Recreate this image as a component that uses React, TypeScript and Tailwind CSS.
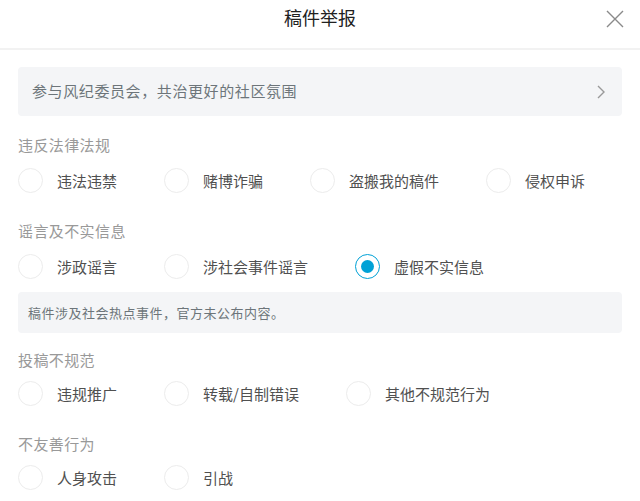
import { useState } from "react";

const font = { fontFamily: '"Noto Sans CJK SC", "Noto Sans", sans-serif' };

interface Section {
  title: string;
  options: string[];
}

const sections: Section[] = [
  { title: "违反法律法规", options: ["违法违禁", "赌博诈骗", "盗搬我的稿件", "侵权申诉"] },
  { title: "谣言及不实信息", options: ["涉政谣言", "涉社会事件谣言", "虚假不实信息"] },
  { title: "投稿不规范", options: ["违规推广", "转载/自制错误", "其他不规范行为"] },
  { title: "不友善行为", options: ["人身攻击", "引战"] },
];

function Radio({ label, checked, onClick }: { label: string; checked: boolean; onClick: () => void }) {
  return (
    <div className="flex shrink-0 items-center mr-[47px] cursor-pointer" onClick={onClick}>
      {checked ? (
        <div className="w-[25px] h-[25px] rounded-full border-[1.5px] border-[#00a1d6] flex items-center justify-center">
          <div className="w-[13px] h-[13px] rounded-full bg-[#00a1d6]" />
        </div>
      ) : (
        <div className="w-[25px] h-[25px] rounded-full border border-[#ececec]" />
      )}
      <span className="ml-[14px] whitespace-nowrap text-[15px] leading-6 text-[#505050]">{label}</span>
    </div>
  );
}

export default function App() {
  const [selected, setSelected] = useState("虚假不实信息");

  return (
    <div className="w-[640px] h-[501px] bg-white overflow-hidden" style={font}>
      {/* 标题栏 */}
      <div className="relative h-[50px] border-b-2 border-[#f2f2f2] flex items-center justify-center">
        <span className="text-[18px] text-[#212121] -mt-[14px]">稿件举报</span>
        <svg className="absolute right-[15px] top-[9px]" width="20" height="20" viewBox="0 0 20 20">
          <path d="M2 2L18 18M18 2L2 18" stroke="#8a8a8a" strokeWidth="1.4" fill="none" />
        </svg>
      </div>

      <div className="px-[18px]">
        <div className="mt-[17px] h-[49px] rounded bg-[#f4f5f7] flex items-center justify-between pl-[14px] pr-[16px]">
          <span className="text-[15px] tracking-[0.6px] text-[#6d757a]">参与风纪委员会，共治更好的社区氛围</span>
          <svg width="10" height="16" viewBox="0 0 10 16">
            <path d="M2 2L8 8L2 14" stroke="#999" strokeWidth="1.4" fill="none" />
          </svg>
        </div>

        {sections.map((s, i) => (
          <div key={s.title} className={i === 0 ? "mt-[19px]" : i === 2 ? "mt-[17px]" : "mt-[28px]"}>
            <div className="text-[15px] leading-5 tracking-[0.4px] text-[#999]">{s.title}</div>
            <div className={i >= 2 ? "mt-[11px] flex items-center" : "mt-[13px] flex items-center"}>
              {s.options.map((o) => (
                <Radio key={o} label={o} checked={selected === o} onClick={() => setSelected(o)} />
              ))}
            </div>
            {i === 1 && selected === "虚假不实信息" && (
              <div className="mt-[13px] h-[41px] rounded bg-[#f4f5f7] flex items-center px-[10px] text-[13px] tracking-[0.5px] text-[#6d757a]">
                稿件涉及社会热点事件，官方未公布内容。
              </div>
            )}
          </div>
        ))}
      </div>
    </div>
  );
}
